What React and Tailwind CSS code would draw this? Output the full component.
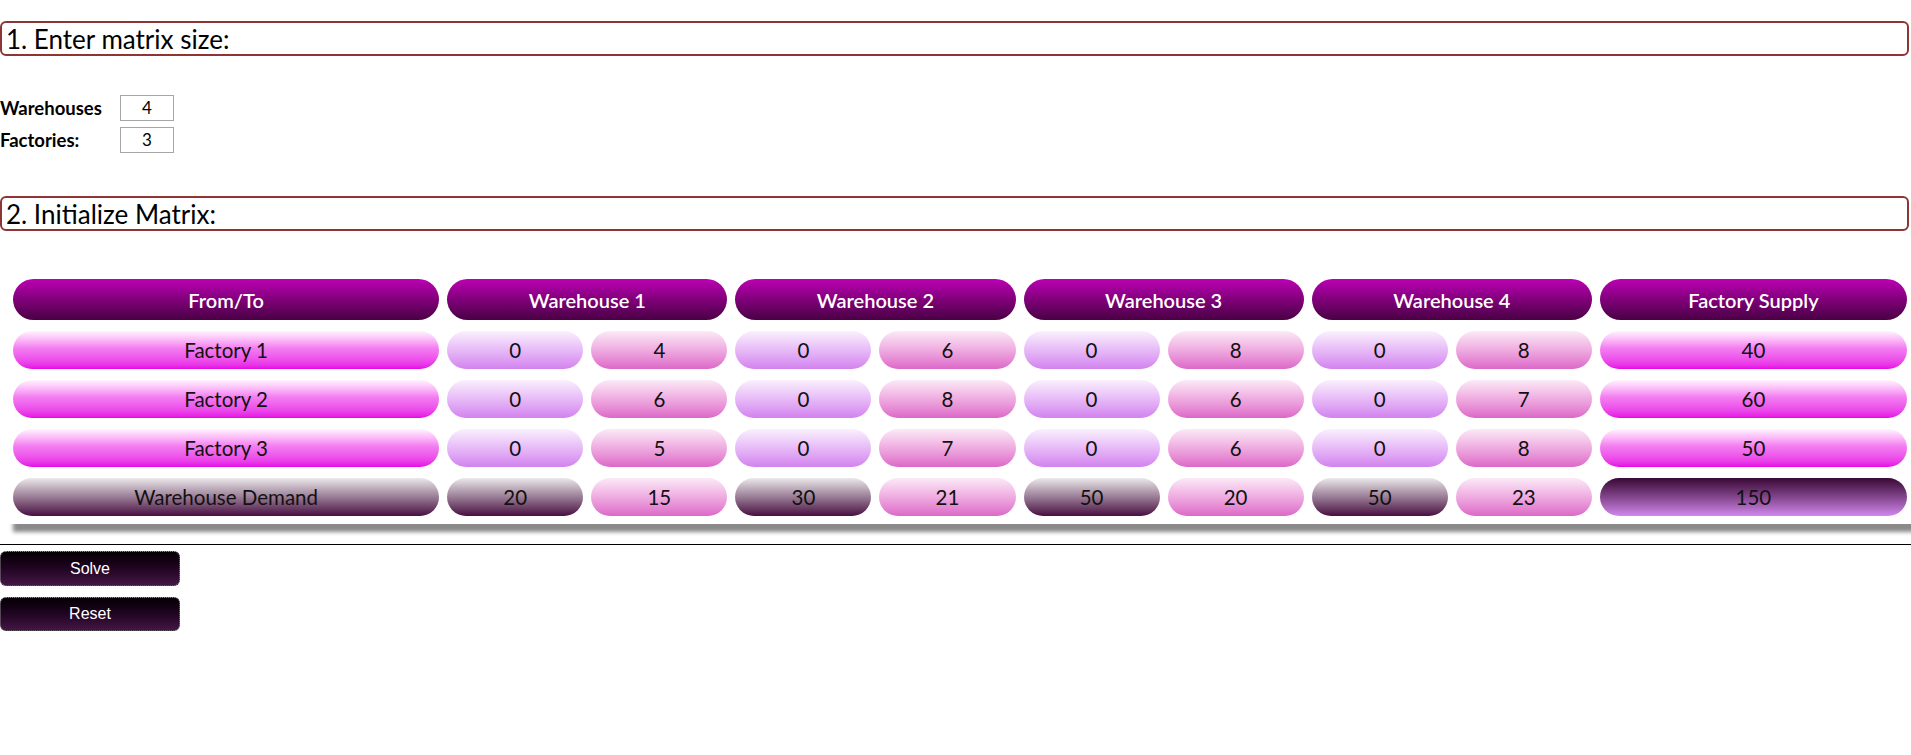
import React from 'react'

const font = { fontFamily: 'Lato, "Noto Sans", sans-serif' }

const warehouses = [
  { costs: [4, 6, 5], demand: [20, 15] },
  { costs: [6, 8, 7], demand: [30, 21] },
  { costs: [8, 6, 6], demand: [50, 20] },
  { costs: [8, 7, 8], demand: [50, 23] },
]

const supply = [40, 60, 50]

const headCell =
  'flex items-center justify-center rounded-full bg-linear-to-b from-[#bc00b4] to-[#4a0045] text-white text-[20px] font-semibold h-[41px]'
const labelCell =
  'flex items-center justify-center rounded-full bg-linear-to-b from-[#fff3fe] via-[#f37df1] via-45% to-[#e600e6] text-[20.5px] text-[#111] h-[38px]'
const zeroCell =
  'flex items-center justify-center rounded-full bg-linear-to-b from-[#faf0fd] to-[#d282ee] text-[20.5px] text-[#111] h-[38px]'
const costCell =
  'flex items-center justify-center rounded-full bg-linear-to-b from-[#fbeaf7] to-[#dc68c8] text-[20.5px] text-[#111] h-[38px]'
const darkCell =
  'flex items-center justify-center rounded-full bg-linear-to-b from-[#ebe9eb] via-[#9a7d96] to-[#470d42] text-[20.5px] text-[#111] h-[38px]'

function SectionTitle({ children }) {
  return (
    <div className="mr-[2px] h-[35px] rounded-md border-2 border-[#8e3434] pl-1 flex items-center text-[26px] text-black leading-none">
      {children}
    </div>
  )
}

function SizeInput({ label, value }) {
  return (
    <div className="flex items-center h-[26px]">
      <span className="w-[120px] text-[18.5px] leading-[26px] font-bold text-black">{label}</span>
      <div className="w-[54px] h-[26px] border border-[#a6a6a6] flex items-center justify-center text-[17px] text-black">
        {value}
      </div>
    </div>
  )
}

export default function App() {
  return (
    <div className="min-h-screen bg-white pt-[21px]" style={font}>
      <SectionTitle>1. Enter matrix size:</SectionTitle>

      <div className="mt-[39px] flex flex-col gap-[6px]">
        <SizeInput label="Warehouses" value="4" />
        <SizeInput label="Factories:" value="3" />
      </div>

      <div className="mt-[43px]">
        <SectionTitle>2. Initialize Matrix:</SectionTitle>
      </div>

      <div className="mt-[40px] ml-[5px] pl-2 pr-1 py-2 bg-white shadow-[8px_8px_4px_#8a8a8a]">
        <div className="grid grid-cols-[426fr_repeat(8,136fr)_307fr] gap-x-2 gap-y-[11px]">
          <div className={headCell}>From/To</div>
          {warehouses.map((w, i) => (
            <div key={i} className={headCell + ' col-span-2'}>
              Warehouse {i + 1}
            </div>
          ))}
          <div className={headCell}>Factory Supply</div>

          {supply.map((s, r) => (
            <React.Fragment key={r}>
              <div className={labelCell}>Factory {r + 1}</div>
              {warehouses.map((w, i) => (
                <React.Fragment key={i}>
                  <div className={zeroCell}>0</div>
                  <div className={costCell}>{w.costs[r]}</div>
                </React.Fragment>
              ))}
              <div className={labelCell}>{s}</div>
            </React.Fragment>
          ))}

          <div className={darkCell}>Warehouse Demand</div>
          {warehouses.map((w, i) => (
            <React.Fragment key={i}>
              <div className={darkCell}>{w.demand[0]}</div>
              <div className={costCell}>{w.demand[1]}</div>
            </React.Fragment>
          ))}
          <div className="flex items-center justify-center rounded-full bg-linear-to-b from-[#3a0836] to-[#d188ee] text-[20.5px] text-[#111] h-[38px]">
            150
          </div>
        </div>
      </div>

      <div className="mt-[20px] border-t border-black" />

      <div className="flex flex-col gap-[11px] mt-[6px]" style={{ fontFamily: '"Liberation Sans", Arial, sans-serif' }}>
        <button className="w-[180px] h-[35px] rounded-md border border-dotted border-[#888] bg-linear-to-b from-[#050005] to-[#431645] text-white text-[16px]">
          Solve
        </button>
        <button className="w-[180px] h-[34px] rounded-md border border-dotted border-[#888] bg-linear-to-b from-[#050005] to-[#431645] text-white text-[16px]">
          Reset
        </button>
      </div>
    </div>
  )
}
